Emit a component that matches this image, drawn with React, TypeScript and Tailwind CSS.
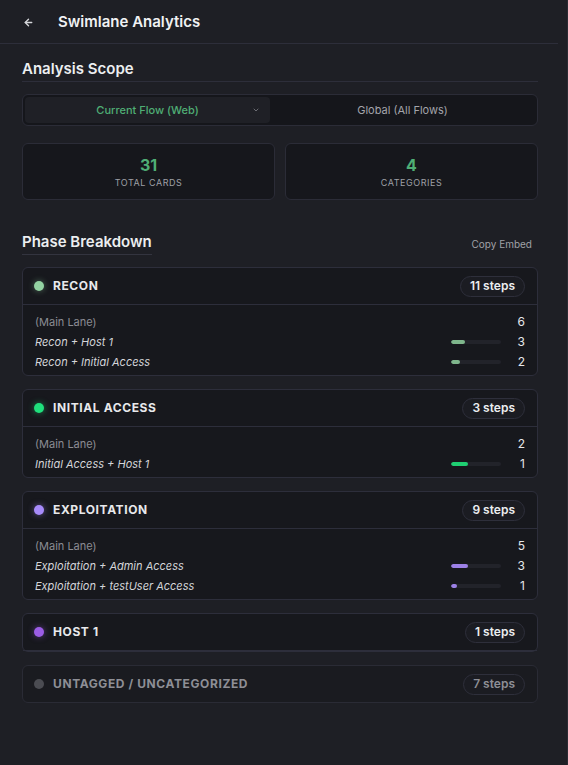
import React from "react";

type Row = { label: string; count: number; main?: boolean };
type Phase = {
  name: string;
  steps: number;
  dot: string;
  glow: string;
  bar: string;
  rows: Row[];
  muted?: boolean;
};

const phases: Phase[] = [
  {
    name: "RECON",
    steps: 11,
    dot: "bg-[#93d3a2]",
    glow: "shadow-[0_0_6px_rgba(147,211,162,0.45)]",
    bar: "bg-[#7fb68c]",
    rows: [
      { label: "(Main Lane)", count: 6, main: true },
      { label: "Recon + Host 1", count: 3 },
      { label: "Recon + Initial Access", count: 2 },
    ],
  },
  {
    name: "INITIAL ACCESS",
    steps: 3,
    dot: "bg-[#1fe07c]",
    glow: "shadow-[0_0_6px_rgba(31,224,124,0.5)]",
    bar: "bg-[#1fcf72]",
    rows: [
      { label: "(Main Lane)", count: 2, main: true },
      { label: "Initial Access + Host 1", count: 1 },
    ],
  },
  {
    name: "EXPLOITATION",
    steps: 9,
    dot: "bg-[#a78bfa]",
    glow: "shadow-[0_0_6px_rgba(167,139,250,0.5)]",
    bar: "bg-[#9c80e6]",
    rows: [
      { label: "(Main Lane)", count: 5, main: true },
      { label: "Exploitation + Admin Access", count: 3 },
      { label: "Exploitation + testUser Access", count: 1 },
    ],
  },
  {
    name: "HOST 1",
    steps: 1,
    dot: "bg-[#9b5de5]",
    glow: "shadow-[0_0_6px_rgba(155,93,229,0.5)]",
    bar: "bg-[#9b5de5]",
    rows: [],
  },
  {
    name: "UNTAGGED / UNCATEGORIZED",
    steps: 7,
    dot: "bg-[#4b4c52]",
    glow: "",
    bar: "bg-[#4b4c52]",
    rows: [],
    muted: true,
  },
];

function PhaseCard({ p }: { p: Phase }) {
  const hasBody = p.rows.length > 0;
  return (
    <div
      className={`rounded-[6px] border ${
        p.muted ? "border-[#2a2b35] bg-[#1a1b20]" : "border-[#2d2e3b] bg-[#17181d]"
      }`}
    >
      <div
        className={`flex items-center justify-between pl-[11px] pr-[12px] ${
          p.muted ? "h-[36px]" : "h-[37px] border-b border-[#2d2e3b]"
        }`}
      >
        <div className="flex items-center gap-[9px]">
          <span className={`h-[10px] w-[10px] rounded-full ${p.dot} ${p.glow}`} />
          <span
            className={`text-[12px] font-bold tracking-[0.05em] ${
              p.muted ? "text-[#8e8f96]" : "text-[#e8e9ec]"
            }`}
          >
            {p.name}
          </span>
        </div>
        <span
          className={`flex h-[21px] items-center rounded-full border border-[#2e2f3b] bg-[#1b1c22] px-[9px] text-[12px] font-semibold ${
            p.muted ? "text-[#8e8f96]" : "text-[#eceef0]"
          }`}
        >
          {p.steps} steps
        </span>
      </div>
      {hasBody && (
        <div className="pb-[3px] pt-[7px]">
          {p.rows.map((r) => (
            <div key={r.label} className="flex h-[20px] items-center justify-between pl-[12px] pr-[12px]">
              <span
                className={`text-[11px] ${
                  r.main ? "text-[#8b8c93]" : "italic text-[#d4d5d9]"
                }`}
              >
                {r.label}
              </span>
              <div className="flex items-center">
                {!r.main && (
                  <div className="h-[4px] w-[50px] overflow-hidden rounded-full bg-[#22232a]">
                    <div
                      className={`h-full rounded-full ${p.bar}`}
                      style={{ width: `${(r.count / p.steps) * 100}%` }}
                    />
                  </div>
                )}
                <span className="w-[24px] text-right text-[12px] text-[#e6e7ea]">{r.count}</span>
              </div>
            </div>
          ))}
        </div>
      )}
    </div>
  );
}

export default function App() {
  return (
    <div
      className="min-h-screen w-full border-r border-[#2a2b33] bg-[#1e1f25] text-white"
      style={{ fontFamily: "Inter, 'Noto Sans', sans-serif" }}
    >
      <div className="mr-[9px] flex h-[44px] items-center border-b border-[#2d2e3a] pl-[23px] pt-[1px]">
        <svg width="11" height="11" viewBox="0 0 24 24" fill="none" stroke="#d6d7db" strokeWidth="3" strokeLinecap="round" strokeLinejoin="round">
          <path d="M19 12H5" />
          <path d="M12 19l-7-7 7-7" />
        </svg>
        <span className="ml-[24px] text-[15px] font-semibold text-[#f0f1f3]">Swimlane Analytics</span>
      </div>

      <div className="pl-[22px] pr-[29px] pt-[15px]">
        <div className="border-b border-[#2d2e3a] pb-[2px]">
          <h2 className="text-[15px] font-semibold leading-[20px] text-[#eceef0]">Analysis Scope</h2>
        </div>

        <div className="mt-[12px] flex h-[32px] rounded-[6px] border border-[#2b2c37] bg-[#15161b] p-[2px]">
          <div className="relative flex w-[245px] items-center justify-center rounded-[4px] bg-[#1f2026]">
            <span className="text-[11px] font-medium text-[#4fae75]">Current Flow (Web)</span>
            <svg className="absolute right-[10px]" width="8" height="8" viewBox="0 0 24 24" fill="none" stroke="#6b6c73" strokeWidth="3" strokeLinecap="round" strokeLinejoin="round">
              <path d="M6 9l6 6 6-6" />
            </svg>
          </div>
          <div className="flex flex-1 items-center justify-center">
            <span className="text-[11px] text-[#a3a4aa]">Global (All Flows)</span>
          </div>
        </div>

        <div className="mt-[17px] grid grid-cols-2 gap-[10px]">
          {[
            { n: "31", l: "TOTAL CARDS" },
            { n: "4", l: "CATEGORIES" },
          ].map((s) => (
            <div key={s.l} className="flex h-[57px] flex-col items-center justify-center rounded-[6px] border border-[#2b2c37] bg-[#16171c] pt-[2px]">
              <span className="text-[16px] font-bold leading-[20px] text-[#4fae75]">{s.n}</span>
              <span className="mt-[1px] text-[9px] tracking-[0.06em] text-[#9fa0a6]">{s.l}</span>
            </div>
          ))}
        </div>

        <div className="mt-[32px] flex items-end justify-between">
          <h2 className="border-b border-[#33343f] pb-[2px] text-[15px] font-semibold leading-[20px] text-[#eceef0]">Phase Breakdown</h2>
          <span className="mb-[3px] mr-[6px] text-[10px] text-[#a0a1a7]">Copy Embed</span>
        </div>

        <div className="mt-[12px] flex flex-col gap-[13px]">
          {phases.map((p) => (
            <PhaseCard key={p.name} p={p} />
          ))}
        </div>
      </div>
    </div>
  );
}
